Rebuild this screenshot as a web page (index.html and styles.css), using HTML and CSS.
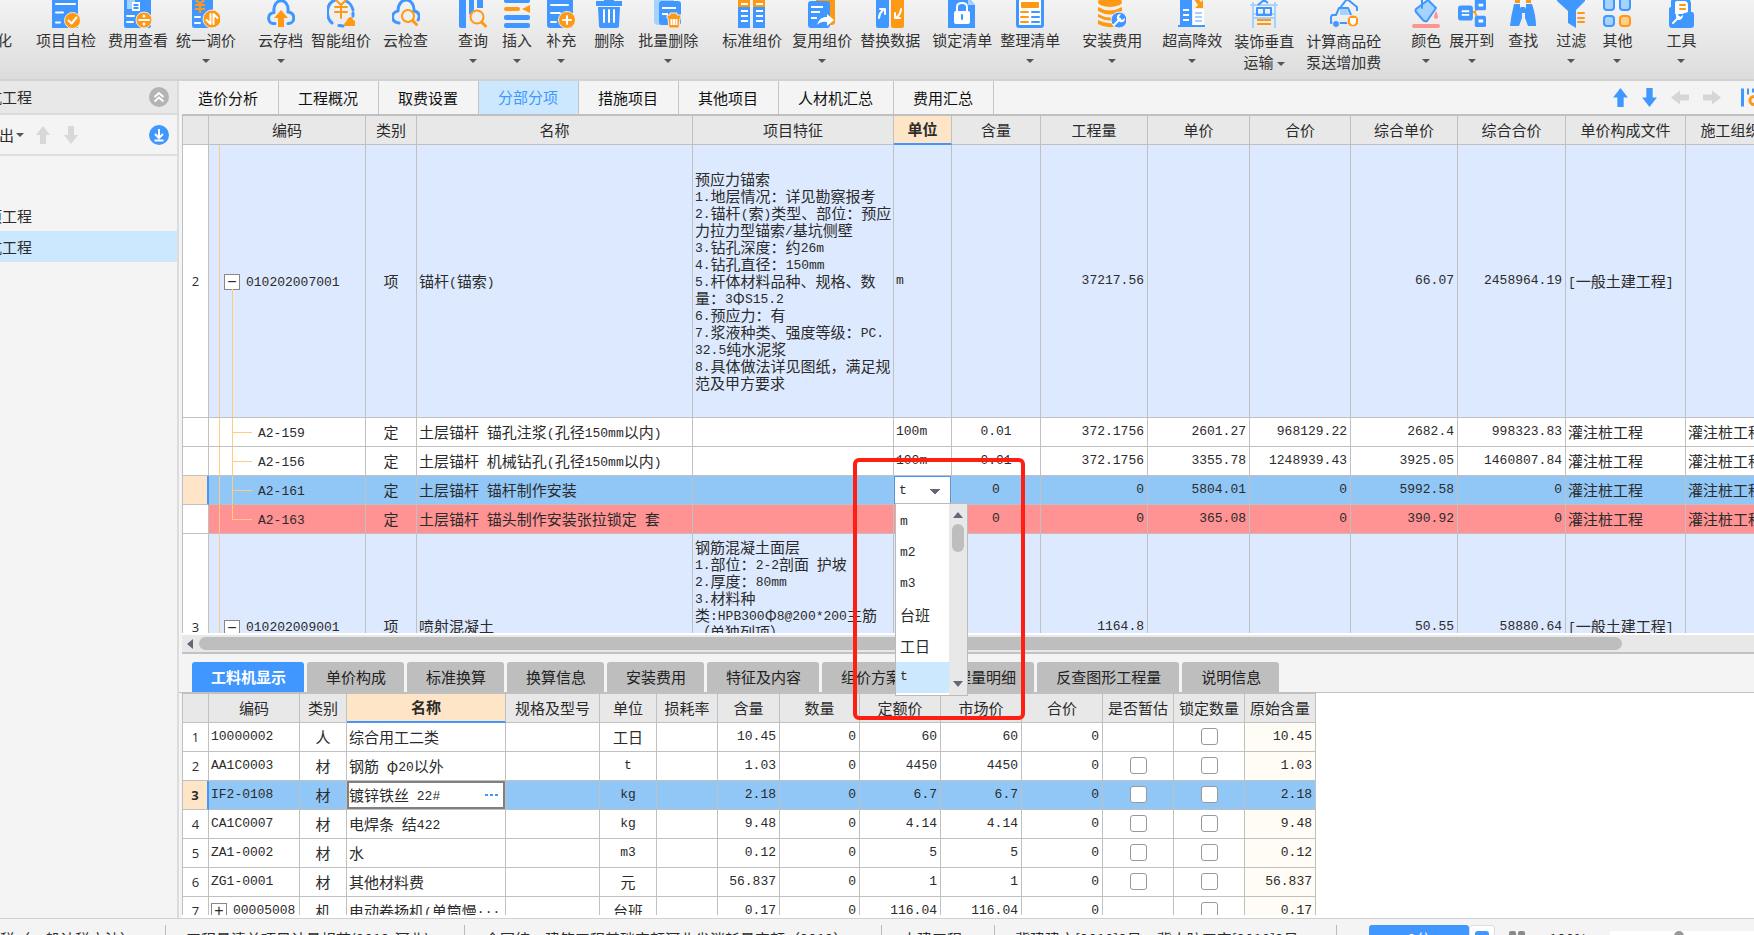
FILE: index.html
```html
<!DOCTYPE html>
<html lang="zh-CN">
<head>
<meta charset="utf-8">
<title>工程计价</title>
<link rel="stylesheet" href="styles.css">
</head>
<body>
<div class="app">
<header class="ribbon">
  <button class="tool tool-first"><svg viewBox="0 0 28 28"></svg><span>化</span></button>
  <button class="tool g24"><svg viewBox="0 0 28 28"><path class="b" d="M0-2h26v30H0z"/><path class="lw" d="M4 4h19M4 12.500h7M4 22.500h4"/><circle class="o ring" cx="20.500" cy="20.500" r="8"/><path class="lw" d="M16.500 20.500l3 3 5-6"/></svg><span>项目自检</span></button>
  <button class="tool g12"><svg viewBox="0 0 28 28"><rect class="b" x="0" y="-2" width="27" height="30" rx="2"/><path class="p" d="M3 0h8v9H3z"/><path class="w" d="M8 2h8v9H8z"/><path class="lb thin" d="M9.500 5h5M9.500 8h5"/><path class="lw" d="M3 16h7M3 22h6"/><circle class="o ring" cx="20" cy="20" r="8"/><path class="lw" d="M15 20h10"/><circle class="w" cx="20" cy="16" r="1.500"/><circle class="w" cx="20" cy="24" r="1.500"/></svg><span>费用查看</span></button>
  <button class="tool g8"><svg viewBox="0 0 28 28"><rect class="b" x="0" y="-2" width="21" height="30" rx="2"/><path class="lo thin" d="M4 0l4 4 4-4M3 5h10M3 9h10M8 4v9"/><path class="lw" d="M3 17h5M3 23h5"/><circle class="o ring" cx="20" cy="19" r="9"/><path class="lw" d="M18.500 14v10l-4-4M21.500 24V14l4 4"/></svg><span>统一调价</span><i class="caret"></i></button>
  <button class="tool g22"><svg viewBox="0 0 28 28"><path class="lb fat" d="M8 23.500H6c-6-1-6-10 1-11C5-3 23-3 21 12c8 1 7 11 1 11.500h-1"/><path class="o" d="M14 10l-7 8h4v9h6v-9h4z"/></svg><span>云存档</span><i class="caret"></i></button>
  <button class="tool g8"><svg viewBox="0 0 28 28"><path class="lb fat" d="M8 0C-2 4-1 18 5 23M12 25.500l4 .500M19 1c3 1 6 5 7 9M26 13v3"/><path class="lo" d="M9 0l5 5 5-5M8 7h12M8 12h12M14 5v13"/><path class="o" d="M17 26c0-4 2-3 3-6 2-4 6-4 6 0 4 1 4 6 1 6z"/></svg><span>智能组价</span></button>
  <button class="tool g12"><svg viewBox="0 0 28 28"><path class="lb fat" d="M7 23C-2 22-1 12 6 11 6-4 23-3 22 11c6 1 6 6 4 9"/><circle class="lo" cx="16" cy="16" r="6"/><path class="lo fat" d="M20.500 20.500l4 4"/></svg><span>云检查</span></button>
  <button class="tool g30"><svg viewBox="0 0 28 28"><path class="b" d="M0-2h7v30H2q-2 0-2-2zM10-2h5v12l-5 5zM18-2h6v10h-6z"/><circle class="lo" cx="18" cy="17" r="6.500"/><path class="lo fat" d="M22.500 22l4 4"/></svg><span>查询</span><i class="caret"></i></button>
  <button class="tool g14"><svg viewBox="0 0 28 28"><rect class="b" x="1" y="-2" width="26" height="5" rx="2"/><rect class="o" x="1" y="7" width="16" height="4" rx="2"/><path class="o" d="M27 5v8l-8-4z"/><rect class="b" x="1" y="15" width="26" height="5" rx="2"/><rect class="b" x="1" y="23" width="26" height="5" rx="2"/></svg><span>插入</span><i class="caret"></i></button>
  <button class="tool g14"><svg viewBox="0 0 28 28"><rect class="b" x="0" y="-3" width="26" height="31" rx="3"/><path class="lw" d="M4 5h17M4 13h9M4 22h5"/><circle class="o ring" cx="20" cy="20" r="8.500"/><path class="lw" d="M16 20h8M20 16v8"/></svg><span>补充</span><i class="caret"></i></button>
  <button class="tool g18"><svg viewBox="0 0 28 28"><path class="b" d="M1 1h8v-3h10v3h8v5H1zM3 7h22l-1 19q0 2-2 2H6q-2 0-2-2z"/><path class="lw" d="M9 10v12M14 10v12M19 10v12"/></svg><span>删除</span></button>
  <button class="tool g14"><svg viewBox="0 0 28 28"><path class="p" d="M0-3h20v28H4q-4 0-4-4z"/><rect class="b" x="5" y="1" width="22" height="24" rx="3"/><path class="lw thin" d="M8 8h14M8 14h6"/><path class="o ring" d="M13 15h3v-2h7v2h4v3h-1l-1 10H15l-1-10h-1z"/><path class="lw thin" d="M17.500 19v6M20 19v6M22.500 19v6"/></svg><span>批量删除</span><i class="caret"></i></button>
  <button class="tool g24"><svg viewBox="0 0 28 28"><path class="o" d="M0-2h12v9H0zM15-2h12v9H15z"/><path class="b" d="M0 7h12v21H0zM15 7h12v21H15z"/><path class="lw thin" d="M3 4h7M18 4h7M3 11h7M3 16h7M3 21h7M18 11h7M18 16h7M18 21h7"/></svg><span>标准组价</span></button>
  <button class="tool g10"><svg viewBox="0 0 28 28"><rect class="o" x="8" y="-4" width="19" height="29" rx="3"/><rect class="b" x="0" y="1" width="22" height="27" rx="3"/><path class="lw thin" d="M3 7h12M3 12h9M3 18h6"/><path class="w" d="M9 25c2-6 5-8 10-8v-3l7 6-7 6v-4q-6-1-10 3z"/></svg><span>复用组价</span><i class="caret"></i></button>
  <button class="tool g8"><svg viewBox="0 0 28 28"><rect class="b" x="0" y="-3" width="13" height="31" rx="2"/><rect class="o" x="15" y="-3" width="13" height="31" rx="2"/><path class="lw" d="M3 18c0-5 2-6 5-9M4 9h5v5M25 9c0 5-2 6-5 9M24 18h-5v-5"/></svg><span>替换数据</span></button>
  <button class="tool g12"><svg viewBox="0 0 28 28"><path class="b" d="M0-3h20l7 8v23H0z"/><path class="p" d="M20-2v7h7z"/><rect class="w" x="6" y="11" width="16" height="13" rx="2"/><path class="lw" d="M9 12V7q0-4 5-4t5 4v5"/><path class="lb" d="M14 15v4"/></svg><span>锁定清单</span></button>
  <button class="tool g8"><svg viewBox="0 0 28 28"><rect class="b" x="0" y="-3" width="28" height="31" rx="3"/><path class="w" d="M3 0h22v25H3z"/><rect class="o" x="5" y="2" width="18" height="6" rx="1"/><path class="lo" d="M5 12h7M5 17h7M5 22h7"/><path class="lb" d="M16 12h7M16 17h7M16 22h7"/></svg><span>整理清单</span><i class="caret"></i></button>
  <button class="tool g22"><svg viewBox="0 0 28 28"><ellipse class="o" cx="12" cy="2" rx="12" ry="5"/><path class="o" d="M0 7q12 7 24 0v4q-12 7-24 0zM0 14q12 7 24 0v3q-12 7-24 0zM0 20q10 6 22 1v4q-12 5-22-1z"/><circle class="b ring" cx="21" cy="20" r="8"/><path class="lw" d="M16 25l6-6"/><path class="w" d="M19 19q-1-5 4-5l-2 3 3 3 3-2q0 5-5 4z"/></svg><span>安装费用</span><i class="caret"></i></button>
  <button class="tool g20"><svg viewBox="0 0 28 28"><path class="b" d="M2-2h12v27H2zM0 25h27v2H0z"/><path class="w" d="M15 9h11v16H15z"/><path class="lw thin" d="M5 10h6M5 15h6M5 20h6"/><path class="lp thin" d="M17 13h7M17 17h7M17 21h7"/><path class="o" d="M15-2l3-1 5 5 2-2v8h-8l3-3z"/></svg><span>超高降效</span><i class="caret"></i></button>
  <button class="tool g12 two-line"><svg viewBox="0 0 28 28"><path class="lp" d="M3 3v25M25 3v25M1 5h26M3 14h22M3 18h22"/><path class="lb thin" d="M7 8h14v7H7zM14 8v7M8 5l6-5 4 3"/><path class="lo thin" d="M7 20h14M7 24h14"/></svg><span>装饰垂直<br>运输 <i class="caret caret-inline"></i></span></button>
  <button class="tool g12 two-line"><svg viewBox="0 0 28 28"><path class="lb thin" d="M10 8l7-9 10 8v4M2 15h4l3-7h9l3 7v8H1v-6z"/><path class="p" d="M10 9h7l2 6h-9z"/><circle class="b ring" cx="6" cy="24" r="3.500"/><circle class="o ring" cx="23" cy="21" r="6"/><path class="w" d="M20 18h6v3q0 3-3 4-3-1-3-4z"/></svg><span>计算商品砼<br>泵送增加费</span></button>
  <button class="tool g30"><svg viewBox="0 0 28 28"><path class="p lb thin" d="M4 9l12-9 8 8-9 13q-2 1-4-1l-7-8q-1-2 0-3z"/><path class="lb" d="M10 8V0l-4-3"/><path class="r" d="M24 11q4 7 0 8-4-1 0-8z"/><rect class="r" x="0" y="24" width="28" height="4" rx="2"/></svg><span>颜色</span><i class="caret"></i></button>
  <button class="tool g8"><svg viewBox="0 0 30 28"><path class="lo" d="M14 12h4l4-8M18 12l4 9"/><rect class="b" x="0" y="5" width="16" height="16" rx="3"/><rect class="b" x="18" y="-2" width="12" height="12" rx="2"/><rect class="b" x="18" y="16" width="12" height="12" rx="2"/><path class="lw thin" d="M4 11h8M4 15h8"/><path class="w" d="M22 3h5v3h-5zM22 20h5v3h-5z"/></svg><span>展开到</span><i class="caret"></i></button>
  <button class="tool g14"><svg viewBox="0 0 28 28"><path class="b" d="M5 4h6v3l2 2v9l-3 8H1q1-10 4-22zM17 4h6q4 12 4 22h-8l-3-8V9l1-2z"/><path class="b" d="M12 7h4v6h-4z"/><path class="o" d="M6-2h5v5H6zM17-2h5v5h-5z"/></svg><span>查找</span></button>
  <button class="tool g18"><svg viewBox="0 0 28 28"><path class="b" d="M0-3h28v4l-9 9v18l-8-5V11L0 1z"/><path class="lo" d="M21 13h6M21 18h6M21 22h6"/></svg><span>过滤</span><i class="caret"></i></button>
  <button class="tool g16"><svg viewBox="0 0 28 28"><rect class="p lb" x="1" y="-2" width="10" height="12" rx="3"/><rect class="p lb" x="17" y="-2" width="10" height="12" rx="3"/><rect class="p lb" x="1" y="16" width="10" height="10" rx="3"/><rect class="po lo" x="17" y="16" width="10" height="10" rx="3"/></svg><span>其他</span><i class="caret"></i></button>
  <button class="tool g34"><svg viewBox="0 0 28 28"><path class="b" d="M4 2q0-4 4-4h10q6 0 6 6v8h1q2 0 2 3v10q0 3-3 3H5q-3 0-3-3V9q0-2 2-2z"/><path class="w" d="M8 3q0-2 2-2h7q4 0 4 4v7l-6 2H8z"/><path class="lo" d="M13 5h5M13 9h5"/><path class="lw" d="M6 23l6-6"/><path class="w" d="M9 17q-1-5 4-5l-2 3 2 2 3-2q0 5-5 5z"/></svg><span>工具</span><i class="caret"></i></button>
</header>

<div class="body">
<aside class="side">
  <div class="side-head"><div class="cut">基坑工程</div><button class="round gray" aria-label="收起"><svg viewBox="0 0 20 20"><path d="M5.500 10L10 6l4.500 4M5.500 14.500l4.500-4 4.500 4"/></svg></button></div>
  <div class="side-tools"><button class="cut-out">导出</button><i class="caret"></i>
    <button class="mini up" aria-label="上移"><svg viewBox="0 0 14 18"><path d="M7 0l7 9h-4v9H4V9H0z"/></svg></button>
    <button class="mini" aria-label="下移"><svg viewBox="0 0 14 18"><path d="M7 18L0 9h4V0h6v9h4z"/></svg></button>
    <button class="round" aria-label="展开"><svg viewBox="0 0 20 20"><path d="M10 4v8M6 9l4 4 4-4M5.500 15.500h9"/></svg></button></div>
  <nav class="tree"><a href="#" class="node"><span class="cut">单项工程</span></a><a href="#" class="node on"><span class="cut">基坑工程</span></a></nav>
</aside>

<main class="main">
  <div class="tabs">
    <button>造价分析</button><button>工程概况</button><button>取费设置</button><button class="on">分部分项</button><button>措施项目</button><button>其他项目</button><button>人材机汇总</button><button>费用汇总</button>
    <div class="moves">
      <button class="act" aria-label="上"><svg viewBox="0 0 14 18"><path d="M7 0l7 9h-4v9H4V9H0z"/></svg></button>
      <button class="act" aria-label="下"><svg viewBox="0 0 14 18"><path d="M7 18L0 9h4V0h6v9h4z"/></svg></button>
      <button aria-label="左"><svg class="wide" viewBox="0 0 18 14"><path d="M0 7l9-7v4h9v6H9v4z"/></svg></button>
      <button aria-label="右"><svg class="wide" viewBox="0 0 18 14"><path d="M18 7L9 0v4H0v6h9v4z"/></svg></button>
      <button class="act more" aria-label="设置"><svg class="wide" viewBox="0 0 18 18"><path d="M0 0h3v18H0zM6 0h2v6H6zM11 0h2v4h-2z"/><circle class="lo fat" cx="13" cy="12" r="4"/></svg></button>
    </div>
  </div>

  <section class="upper">
  <table class="grid items">
    <colgroup><col class="w26"><col class="w157"><col class="w51"><col class="w276"><col class="w201"><col class="w58"><col class="w89"><col class="w107"><col class="w102"><col class="w101"><col class="w107"><col class="w108"><col class="w120"><col class="w120"></colgroup>
    <thead><tr><th></th><th>编码</th><th>类别</th><th>名称</th><th>项目特征</th><th class="sel">单位</th><th>含量</th><th>工程量</th><th>单价</th><th>合价</th><th>综合单价</th><th>综合合价</th><th>单价构成文件</th><th>施工组织措施</th></tr></thead>
    <tbody>
    <tr class="bill first"><td class="no">2</td><td class="code parent"><button class="fold" aria-label="折叠">−</button><span class="m">010202007001</span></td><td class="c">项</td><td>锚杆<span class="m">(</span>锚索<span class="m">)</span></td>
    <td class="feat">预应力锚索<br><span class="m">1.</span>地层情况：详见勘察报考<br><span class="m">2.</span>锚杆<span class="m">(</span>索<span class="m">)</span>类型、部位：预应<br>力拉力型锚索<span class="m">/</span>基坑侧壁<br><span class="m">3.</span>钻孔深度：约<span class="m">26m</span><br><span class="m">4.</span>钻孔直径：<span class="m">150mm</span><br><span class="m">5.</span>杆体材料品种、规格、数<br>量：<span class="m">3</span>Φ<span class="m">S15.2</span><br><span class="m">6.</span>预应力：有<br><span class="m">7.</span>浆液种类、强度等级：<span class="m">PC.</span><br><span class="m">32.5</span>纯水泥浆<br><span class="m">8.</span>具体做法详见图纸，满足规<br>范及甲方要求</td>
    <td class="m">m</td><td></td><td class="n">37217.56</td><td></td><td></td><td class="n">66.07</td><td class="n">2458964.19</td><td><span class="m">[</span>一般土建工程<span class="m">]</span></td><td></td></tr>
    <tr><td class="no"></td><td class="code child"><i class="branch"></i><span class="m">A2-159</span></td><td class="c">定</td><td>土层锚杆<span class="m"> </span>锚孔注浆<span class="m">(</span>孔径<span class="m">150mm</span>以内<span class="m">)</span></td><td></td><td class="m">100m</td><td class="m c">0.01</td><td class="n">372.1756</td><td class="n">2601.27</td><td class="n">968129.22</td><td class="n">2682.4</td><td class="n">998323.83</td><td>灌注桩工程</td><td>灌注桩工程</td></tr>
    <tr><td class="no"></td><td class="code child"><i class="branch"></i><span class="m">A2-156</span></td><td class="c">定</td><td>土层锚杆<span class="m"> </span>机械钻孔<span class="m">(</span>孔径<span class="m">150mm</span>以内<span class="m">)</span></td><td></td><td class="m">100m</td><td class="m c">0.01</td><td class="n">372.1756</td><td class="n">3355.78</td><td class="n">1248939.43</td><td class="n">3925.05</td><td class="n">1460807.84</td><td>灌注桩工程</td><td>灌注桩工程</td></tr>
    <tr class="current"><td class="no"></td><td class="code child"><i class="branch"></i><span class="m">A2-161</span></td><td class="c">定</td><td>土层锚杆<span class="m"> </span>锚杆制作安装</td><td></td><td class="edit"><select class="unit" aria-label="单位"><option>t</option><option>m</option><option>m2</option><option>m3</option></select></td><td class="m c">0</td><td class="n">0</td><td class="n">5804.01</td><td class="n">0</td><td class="n">5992.58</td><td class="n">0</td><td>灌注桩工程</td><td>灌注桩工程</td></tr>
    <tr class="warn"><td class="no"></td><td class="code child last"><i class="branch"></i><span class="m">A2-163</span></td><td class="c">定</td><td>土层锚杆<span class="m"> </span>锚头制作安装张拉锁定<span class="m"> </span>套</td><td></td><td></td><td class="m c">0</td><td class="n">0</td><td class="n">365.08</td><td class="n">0</td><td class="n">390.92</td><td class="n">0</td><td>灌注桩工程</td><td>灌注桩工程</td></tr>
    <tr class="bill second"><td class="no">3</td><td class="code parent"><button class="fold" aria-label="折叠">−</button><span class="m">010202009001</span></td><td class="c">项</td><td>喷射混凝土</td>
    <td class="feat top">钢筋混凝土面层<br><span class="m">1.</span>部位：<span class="m">2-2</span>剖面<span class="m"> </span>护坡<br><span class="m">2.</span>厚度：<span class="m">80mm</span><br><span class="m">3.</span>材料种<br>类<span class="m">:HPB300</span>Φ<span class="m">8@200*200</span>主筋<br>（单独列项）</td>
    <td></td><td></td><td class="n">1164.8</td><td></td><td></td><td class="n">50.55</td><td class="n">58880.64</td><td><span class="m">[</span>一般土建工程<span class="m">]</span></td><td></td></tr>
    </tbody>
  </table>
  </section>
  <div class="hscroll"><i class="left"></i><i class="thumb"></i></div>

  <div class="subtabs"><button class="on">工料机显示</button><button>单价构成</button><button>标准换算</button><button>换算信息</button><button>安装费用</button><button>特征及内容</button><button>组价方案</button><button>工程量明细</button><button>反查图形工程量</button><button>说明信息</button></div>

  <section class="lower">
  <table class="grid parts">
    <colgroup><col class="w26"><col class="w91"><col class="w47"><col class="w159"><col class="w94"><col class="w57"><col class="w61"><col class="w62"><col class="w80"><col class="w81"><col class="w81"><col class="w81"><col class="w71"><col class="w71"><col class="w71"></colgroup>
    <thead><tr><th></th><th>编码</th><th>类别</th><th class="sel">名称</th><th>规格及型号</th><th>单位</th><th>损耗率</th><th>含量</th><th>数量</th><th>定额价</th><th>市场价</th><th>合价</th><th>是否暂估</th><th>锁定数量</th><th>原始含量</th></tr></thead>
    <tbody>
    <tr><td class="no">1</td><td class="m">10000002</td><td class="c">人</td><td>综合用工二类</td><td></td><td class="c">工日</td><td></td><td class="n">10.45</td><td class="n">0</td><td class="n">60</td><td class="n">60</td><td class="n">0</td><td></td><td class="c"><input type="checkbox" aria-label="锁定数量"></td><td class="n orig">10.45</td></tr>
    <tr><td class="no">2</td><td class="m">AA1C0003</td><td class="c">材</td><td>钢筋<span class="m"> </span>φ<span class="m">20</span>以外</td><td></td><td class="m c">t</td><td></td><td class="n">1.03</td><td class="n">0</td><td class="n">4450</td><td class="n">4450</td><td class="n">0</td><td class="c"><input type="checkbox" aria-label="是否暂估"></td><td class="c"><input type="checkbox" aria-label="锁定数量"></td><td class="n orig">1.03</td></tr>
    <tr class="current"><td class="no">3</td><td class="m">IF2-0108</td><td class="c">材</td><td class="cell-edit"><div class="editbox"><span>镀锌铁丝<span class="m"> 22#</span></span><button aria-label="更多"><svg viewBox="0 0 14 4"><path d="M0 1h3v2H0zM5 1h3v2H5zM10 1h3v2h-3z"/></svg></button></div></td><td></td><td class="m c">kg</td><td></td><td class="n">2.18</td><td class="n">0</td><td class="n">6.7</td><td class="n">6.7</td><td class="n">0</td><td class="c"><input type="checkbox" aria-label="是否暂估"></td><td class="c"><input type="checkbox" aria-label="锁定数量"></td><td class="n">2.18</td></tr>
    <tr><td class="no">4</td><td class="m">CA1C0007</td><td class="c">材</td><td>电焊条<span class="m"> </span>结<span class="m">422</span></td><td></td><td class="m c">kg</td><td></td><td class="n">9.48</td><td class="n">0</td><td class="n">4.14</td><td class="n">4.14</td><td class="n">0</td><td class="c"><input type="checkbox" aria-label="是否暂估"></td><td class="c"><input type="checkbox" aria-label="锁定数量"></td><td class="n orig">9.48</td></tr>
    <tr><td class="no">5</td><td class="m">ZA1-0002</td><td class="c">材</td><td>水</td><td></td><td class="m c">m3</td><td></td><td class="n">0.12</td><td class="n">0</td><td class="n">5</td><td class="n">5</td><td class="n">0</td><td class="c"><input type="checkbox" aria-label="是否暂估"></td><td class="c"><input type="checkbox" aria-label="锁定数量"></td><td class="n orig">0.12</td></tr>
    <tr><td class="no">6</td><td class="m">ZG1-0001</td><td class="c">材</td><td>其他材料费</td><td></td><td class="c">元</td><td></td><td class="n">56.837</td><td class="n">0</td><td class="n">1</td><td class="n">1</td><td class="n">0</td><td class="c"><input type="checkbox" aria-label="是否暂估"></td><td class="c"><input type="checkbox" aria-label="锁定数量"></td><td class="n orig">56.837</td></tr>
    <tr><td class="no">7</td><td class="m"><button class="fold" aria-label="展开">+</button>00005008</td><td class="c">机</td><td>电动卷扬机<span class="m">(</span>单筒慢<span class="m">···</span></td><td></td><td class="c">台班</td><td></td><td class="n">0.17</td><td class="n">0</td><td class="n">116.04</td><td class="n">116.04</td><td class="n">0</td><td></td><td class="c"><input type="checkbox" aria-label="锁定数量"></td><td class="n orig">0.17</td></tr>
    </tbody>
  </table>
  </section>

  <div class="dropdown">
    <ul role="listbox" aria-label="单位"><li class="m">m</li><li class="m">m2</li><li class="m">m3</li><li>台班</li><li>工日</li><li class="m on">t</li></ul>
    <div class="vscroll"><i class="vup"></i><i class="vthumb"></i><i class="vdown"></i></div>
  </div>
  <div class="marker"></div>
</main>
</div>

<footer class="status">
  <span class="s1">税（一般计税方法）</span><span class="s2">工程量清单项目计量规范(2013-河北)</span><span class="s3">全国统一建筑工程基础定额河北省消耗量定额（2012）</span><span class="s4">土建工程</span><span class="s5">冀建建市[2018]3号、冀人防工字[2018]2号</span>
  <button class="score">0分</button><button class="sq" aria-label="窗口"><i></i></button><button class="tiles" aria-label="布局"><i></i><i></i></button><span class="zoom">100%</span><div class="slider"><i></i><b></b></div>
</footer>
</div>
</body>
</html>
```
FILE: styles.css
```css
* { box-sizing: border-box; }
body {
  margin: 0;
  height: 100vh;
  overflow: hidden;
  background: #f4f4f4;
  color: #2b2b2b;
  font: 15px/20px "Noto Sans CJK SC", "Liberation Sans", sans-serif;
}
button, select { font: inherit; color: inherit; padding: 0; margin: 0; border: 0; background: none; }
i { font-style: normal; }
/* the lower part of the status bar runs past the window edge */
.app { display: flex; flex-direction: column; height: calc(100vh + 18px); }

/* icon paint */
.b { fill: #4097ff; }
.o { fill: #ff9914; }
.w { fill: #fff; }
.p { fill: #a5d2ff; }
.po { fill: #ffcf8c; }
.r { fill: #ff9494; }
.lb, .lo, .lw, .lp { stroke-width: 2; stroke-linecap: round; stroke-linejoin: round; }
.lb { stroke: #4097ff; }
.lo { stroke: #ff9914; }
.lw { stroke: #fff; }
.lp { stroke: #a5d2ff; }
.lb:not(.p), .lo:not(.po), .lw, .lp { fill: none; }
.lb.fat, .lo.fat { stroke-width: 3; }
.lb.thin, .lo.thin, .lw.thin, .lp.thin { stroke-linecap: butt; }
.ring { stroke: #eee; stroke-width: 1; }

/* ribbon */
.ribbon {
  flex: none;
  display: flex;
  align-items: flex-start;
  height: 81px;
  overflow: hidden;
  white-space: nowrap;
  background: linear-gradient(#f3f3f3, #dcdcdc);
  border-bottom: 2px solid #d2d2d2;
}
.tool { flex: none; display: flex; flex-direction: column; align-items: center; color: #333; }
.tool svg { height: 28px; width: 28px; margin-bottom: 2px; }
.tool-first { width: 15px; margin-left: -3px; }
.tool > .caret { margin-top: 9px; }
.two-line { line-height: 21px; }
.caret { display: block; width: 0; height: 0; border: 4px solid transparent; border-top-color: #555; border-bottom: 0; }
.caret-inline { display: inline-block; vertical-align: middle; }
.g8 { margin-left: 8px; }
.g10 { margin-left: 10px; }
.g12 { margin-left: 12px; }
.g14 { margin-left: 14px; }
.g16 { margin-left: 16px; }
.g18 { margin-left: 18px; }
.g20 { margin-left: 20px; }
.g22 { margin-left: 22px; }
.g24 { margin-left: 24px; }
.g30 { margin-left: 30px; }
.g34 { margin-left: 34px; }

.body { flex: 1; display: flex; min-height: 0; }

/* project sidebar */
.side { flex: none; width: 179px; border-right: 2px solid #dcdcdc; }
.side-head, .side-tools { display: flex; align-items: center; padding-right: 8px; }
.side-head { height: 34px; background: #e8e8e8; border-bottom: 2px solid #dcdcdc; }
.side-tools { height: 41px; border-bottom: 2px solid #dfdfdf; }
.cut { display: flex; justify-content: flex-end; width: 32px; overflow: hidden; white-space: nowrap; }
.cut-out { display: flex; justify-content: flex-end; width: 14px; overflow: hidden; white-space: nowrap; margin-right: 2px; }
.round { width: 20px; height: 20px; margin-left: auto; border-radius: 50%; background: #4097ff; }
.round.gray { background: #b4b4b4; }
.round svg { display: block; fill: none; stroke: #fff; stroke-width: 2; }
.mini { width: 14px; height: 18px; margin-left: 14px; }
.mini svg { display: block; fill: #d8d8d8; }
.mini.up { margin-left: 12px; }
.tree { padding-top: 44px; }
.node { display: flex; align-items: center; height: 31px; color: inherit; text-decoration: none; }
.node.on { background: #cce8ff; }

/* main column */
.main { position: relative; flex: 1; min-width: 0; display: flex; flex-direction: column; }
.tabs { flex: none; display: flex; height: 33px; }
.tabs > button { padding: 1px 20px 0 19px; border-right: 1px solid #c4c4c4; color: #111; }
.tabs > .on { background: #cce8ff; color: #4097ff; padding-top: 0; padding-bottom: 2px; }
.moves { display: flex; align-items: center; gap: 14px; margin-left: auto; overflow: hidden; width: 141px; }
.moves button { flex: none; display: flex; fill: #d6d6d6; }
.moves .act { fill: #4097ff; }
.moves .more { margin-left: 6px; }
.moves svg { width: 15px; height: 19px; }
.moves .wide { width: 18px; }

.upper { flex: none; height: 519px; overflow: hidden; margin-left: 3px; background: #fff; }
.grid { table-layout: fixed; border-collapse: separate; border-spacing: 0; border-top: 1px solid #c0c0c0; border-left: 1px solid #c0c0c0; }
.items { width: 1624px; border-top-width: 2px; }
.parts { width: 1134px; }
.grid th, .grid td { border: 0 solid #c0c0c0; border-width: 0 1px 1px 0; white-space: nowrap; overflow: hidden; }
.grid th { height: 29px; padding: 0 0 1px; background: #e8e8e8; font-weight: 400; }
.grid th.sel { background: #ffe5c8; font-weight: 700; border-bottom: 2px solid #4097ff; }
.grid td { height: 29px; padding: 0 3px 1px 2px; line-height: 20px; }
.grid .no { padding: 0; text-align: center; background: #fff; font: 13px/20px "Open Sans", sans-serif; }
.grid .c { text-align: center; padding: 0 0 1px; }
.m, .n { font-family: "Liberation Mono", monospace; font-size: 13px; }
span.m { line-height: 13px; white-space: pre; vertical-align: 1px; }
.grid .m, .grid .n { padding-bottom: 0; }
.grid .n { text-align: right; }
.grid .feat { line-height: 17px; }
.grid .top { vertical-align: top; padding-top: 4px; }
.bill td { background: #dde9fe; }
.grid .first td { height: 273px; }
.grid .second td { height: 186px; }
.current td { background: #91c7f7; }
.warn td { background: #ff9292; }
.grid .current .no { background: #ffe5c8; border-right: 2px solid #4097ff; font-weight: 700; }
.orig { background: #fffbf5; }

.w26 { width: 26px; } .w157 { width: 157px; } .w51 { width: 51px; } .w276 { width: 276px; }
.w201 { width: 201px; } .w58 { width: 58px; } .w89 { width: 89px; } .w107 { width: 107px; }
.w102 { width: 102px; } .w101 { width: 101px; } .w108 { width: 108px; } .w120 { width: 120px; }
.w91 { width: 91px; } .w47 { width: 47px; } .w159 { width: 159px; }
.w94 { width: 94px; } .w57 { width: 57px; } .w61 { width: 61px; } .w62 { width: 62px; }
.w80 { width: 80px; } .w81 { width: 81px; } .w71 { width: 71px; }

/* tree guides in the code column */
.grid .code { position: relative; }
.grid .parent { padding-left: 15px; }
.grid .child { padding-left: 49px; }
.code::before, .code::after { content: ""; position: absolute; top: 0; bottom: 0; width: 1px; background: #ffcb85; }
.code::before { left: 10px; }
.code::after { left: 23px; }
.parent::after { top: calc(50% + 8px); }
.last::after { bottom: 50%; }
.branch { position: absolute; left: 23px; top: 50%; width: 20px; height: 1px; background: #ffcb85; }
.fold { width: 16px; height: 16px; margin-right: 6px; border: 1px solid #888; background: #fff; font: 16px/14px "Liberation Sans", sans-serif; vertical-align: middle; }

.grid .edit { padding: 0; }
.unit {
  display: block;
  width: 100%;
  height: 28px;
  padding-left: 4px;
  border: 1px solid #4097ff;
  border-radius: 0;
  appearance: none;
  font: 13px "Liberation Mono", monospace;
  background: linear-gradient(to bottom right, #667 50%, transparent 52%) 40px 12px / 5px 5px no-repeat, linear-gradient(to bottom left, #667 50%, transparent 52%) 35px 12px / 5px 5px no-repeat, #fff;
}
.grid .cell-edit { padding: 0; }
.editbox { display: flex; justify-content: space-between; align-items: center; height: 28px; border: 2px solid #808080; background: #fff; padding-right: 4px; }
.editbox svg { display: block; width: 14px; height: 4px; fill: #4097ff; }
input[type="checkbox"] { appearance: none; display: block; width: 17px; height: 17px; margin: 0 auto; border: 1px solid #999; border-radius: 3px; background: #fff; }

.hscroll { flex: none; display: flex; align-items: center; gap: 6px; height: 21px; margin-left: 3px; padding: 0 132px 0 5px; border-top: 2px solid #fff; border-bottom: 2px solid #c2c2c2; background: #e8e8e8; }
.left { border: 5px solid transparent; border-right: 6px solid #667; border-left: 0; }
.thumb { flex: 1; height: 13px; border-radius: 7px; background: #bebebe; }

.subtabs { flex: none; display: flex; align-items: flex-end; gap: 3px; height: 39px; padding-left: 13px; border-bottom: 1px solid #c0c0c0; }
.subtabs button { height: 30px; padding: 0 18px 0 19px; border-radius: 3px 3px 0 0; background: #bebebe; color: #222; white-space: nowrap; }
.subtabs .on { background: #4097ff; color: #fff; font-weight: 700; }
.lower { flex: 1; min-height: 0; overflow: hidden; margin-left: 3px; background: #fff; border-bottom: 3px solid #fff; }

/* open unit list */
.dropdown { position: absolute; left: 716px; top: 422px; width: 73px; height: 193px; display: flex; border: 1px solid #bbb; background: #fff; }
.dropdown ul { flex: 1; margin: 0; padding: 3px 0 0; list-style: none; }
.dropdown li { height: 31px; padding-left: 4px; line-height: 30px; }
.dropdown .on { background: #cce8ff; }
.vscroll { width: 18px; display: flex; flex-direction: column; align-items: center; padding: 8px 0; background: #e8e8e8; }
.vup { border: 5px solid transparent; border-bottom: 6px solid #667; border-top: 0; }
.vthumb { width: 12px; height: 28px; margin-top: 6px; border-radius: 6px; background: #bebebe; }
.vdown { margin-top: auto; border: 5px solid transparent; border-top: 6px solid #667; border-bottom: 0; }
.marker { position: absolute; left: 674px; top: 377px; width: 172px; height: 262px; border: 4px solid #ff1e12; border-radius: 6px; pointer-events: none; }

/* status bar */
.status { flex: none; display: flex; align-items: flex-start; height: 35px; padding-top: 6px; border-top: 1px solid #d0d0d0; white-space: nowrap; overflow: hidden; }
.status span { flex: none; padding-top: 4px; }
.s1, .s2, .s3, .s4, .s5 { border-right: 1px solid #b4bcc8; margin-right: 20px; overflow: hidden; }
.s1 { width: 166px; }
.s2 { width: 279px; }
.s3 { width: 397px; }
.s4 { width: 93px; }
.s5 { width: 322px; }
.score { width: 100px; height: 28px; margin-left: 12px; border-radius: 3px; background: #4097ff; color: #fff; }
.sq { width: 26px; height: 28px; padding: 5px; border: 1px solid #ddd; border-radius: 3px; background: #fff; }
.sq i { display: block; height: 16px; border-radius: 3px; background: #4097ff; }
.tiles { display: flex; gap: 2px; margin: 6px 24px 0 14px; }
.tiles i { width: 7px; height: 14px; border-radius: 2px; background: #8a8a8a; }
.slider { display: flex; gap: 28px; align-items: flex-start; flex: 1; height: 20px; margin: 6px 0 0 22px; padding-left: 16px; background: #fff; }
.slider i { width: 20px; height: 2px; margin-top: 4px; background: #ccc; }
.slider b { width: 10px; height: 10px; border-radius: 50%; background: #999; }
```
